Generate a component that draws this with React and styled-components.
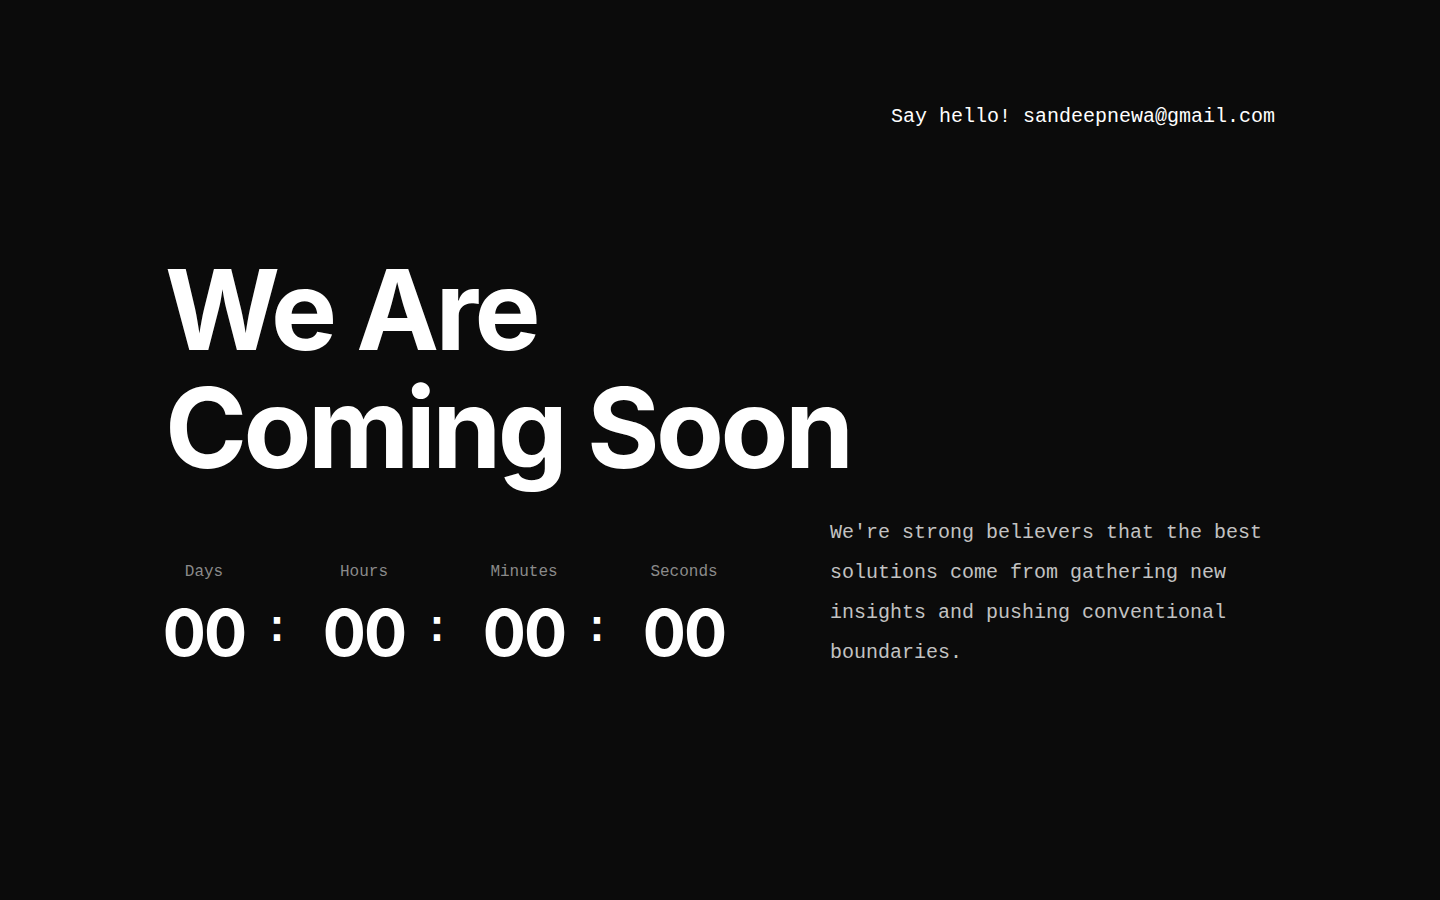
import styled, { createGlobalStyle } from "styled-components";

const GlobalStyle = createGlobalStyle`
  html, body {
    margin: 0;
    padding: 0;
    background-color: #0b0b0b;
  }

  * {
    box-sizing: border-box;
  }
`;

const units = ["Days", "Hours", "Minutes", "Seconds"];

export default function App() {
  return (
    <>
      <GlobalStyle />
      <Page>
        <Header>
          <Contact>
            Say hello! <a href="mailto:sandeepnewa@gmail.com">sandeepnewa@gmail.com</a>
          </Contact>
        </Header>
        <Main>
          <Left>
            <Title>
              <TitleLine>We Are</TitleLine>
              <TitleLine>Coming Soon</TitleLine>
            </Title>
            <Countdown>
              {units.map((label, i) => (
                <Group key={label}>
                  <Unit>
                    <Label>{label}</Label>
                    <Value>00</Value>
                  </Unit>
                  {i < units.length - 1 && <Colon>:</Colon>}
                </Group>
              ))}
            </Countdown>
          </Left>
          <Text>
            We're strong believers that the best solutions come from gathering
            new insights and pushing conventional boundaries.
          </Text>
        </Main>
      </Page>
    </>
  );
}

const Page = styled.div`
  width: 1110px;
  min-height: 900px;
  margin: 0 auto;
  padding-top: 103px;
  color: #fff;
`;

const Header = styled.header`
  display: flex;
  justify-content: flex-end;
`;

const Contact = styled.p`
  margin: 0;
  font-family: "Liberation Mono", "DejaVu Sans Mono", monospace;
  font-size: 20px;
  line-height: 28px;
  color: #fff;

  a {
    color: inherit;
    text-decoration: none;
  }
`;

const Main = styled.section`
  display: flex;
  align-items: flex-end;
  margin-top: 120px;
`;

const Left = styled.div`
  flex: 1;
  min-width: 0;
`;

const Title = styled.h1`
  margin: 0;
  font-family: Inter, "Noto Sans", sans-serif;
  font-weight: 700;
  font-size: 111px;
  line-height: 118px;
  letter-spacing: -3.6px;
  white-space: nowrap;
`;

const TitleLine = styled.span`
  display: block;
  height: 118px;
`;

const Countdown = styled.div`
  display: flex;
  margin-top: 75px;
`;

const Group = styled.div`
  display: flex;
`;

const Unit = styled.div`
  display: flex;
  flex-direction: column;
  align-items: center;
  width: 78px;
`;

const Label = styled.span`
  font-family: "Liberation Mono", "DejaVu Sans Mono", monospace;
  font-size: 16px;
  line-height: 20px;
  color: #8a8a8a;
`;

const Value = styled.span`
  margin-top: 19px;
  font-family: Inter, "Noto Sans", sans-serif;
  font-weight: 700;
  font-size: 64px;
  line-height: 64px;
  letter-spacing: -2px;
  color: #fff;
`;

const Colon = styled.span`
  width: 82px;
  padding: 45px 14px 0 0;
  text-align: center;
  font-family: "Liberation Mono", "DejaVu Sans Mono", monospace;
  font-weight: 700;
  font-size: 44px;
  line-height: 44px;
  color: #fff;
`;

const Text = styled.p`
  flex-shrink: 0;
  width: 445px;
  margin: 0 0 -8px;
  font-family: "Liberation Mono", "DejaVu Sans Mono", monospace;
  font-size: 20px;
  line-height: 40px;
  color: #c2c2c2;
`;
